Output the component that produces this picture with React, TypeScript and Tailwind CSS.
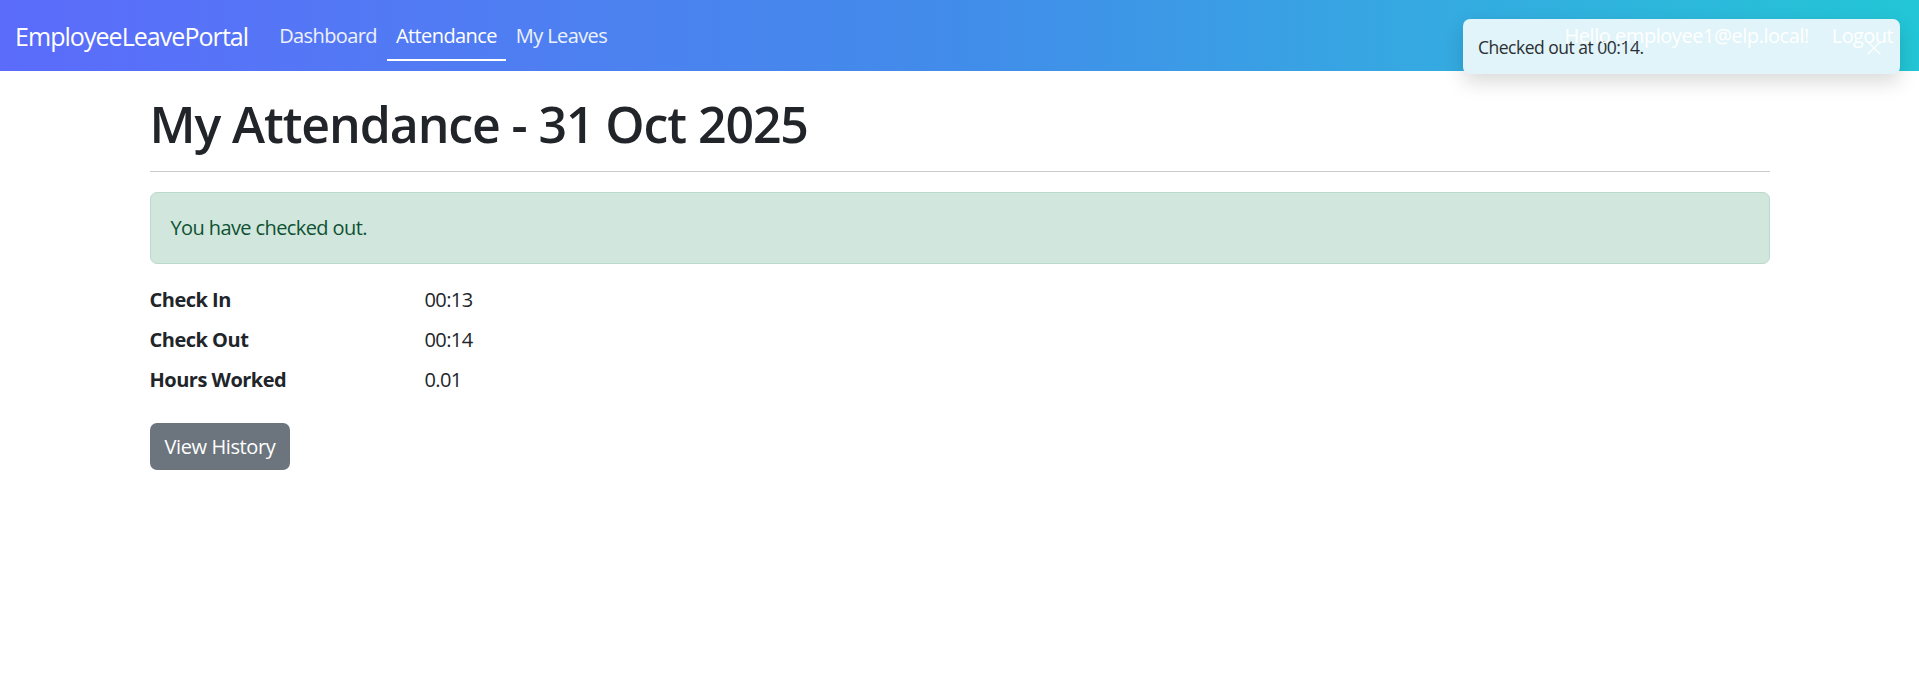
import { X } from "lucide-react";

const font = { fontFamily: '"Open Sans", "Noto Sans", sans-serif' };

const rows = [
  { label: "Check In", value: "00:13" },
  { label: "Check Out", value: "00:14" },
  { label: "Hours Worked", value: "0.01" },
];

function Navbar() {
  return (
    <nav className="h-[71px] flex items-center px-[15px] bg-gradient-to-r from-[#5b6bfb] via-[#418cea] to-[#22c6d6] text-white tracking-[-0.6px]">
      <span className="text-[25px] leading-[30px] tracking-[-0.95px] mr-[21px]">EmployeeLeavePortal</span>
      <ul className="flex items-center text-[20px] leading-[30px]">
        <li className="px-[10px] text-white/90">Dashboard</li>
        <li className="px-[9px] pt-[10px] pb-[8px] border-b-[2px] border-white">Attendance</li>
        <li className="px-[10px] text-white/90">My Leaves</li>
      </ul>
      <div className="ml-auto flex items-center relative z-20 text-[20px] leading-[30px]">
        <span className="mr-[23px] tracking-[-0.45px]">Hello employee1@elp.local!</span>
        <span className="pr-[11px]">Logout</span>
      </div>
    </nav>
  );
}

function Toast() {
  return (
    <div className="absolute z-10 top-[19px] right-[19px] w-[437px] h-[55px] rounded-[7px] bg-[#e0f4f9] shadow-[0_8px_20px_rgba(0,0,0,0.15)] flex items-center pl-[15px] pr-[14px]">
      <span className="text-[17.5px] tracking-[-0.5px] text-[#2b2f33] mt-[2px]">Checked out at 00:14.</span>
      <X className="ml-auto text-white/90 mt-[2px]" size={24} strokeWidth={1.4} />
    </div>
  );
}

export default function App() {
  return (
    <div className="relative min-h-[676px] bg-white text-[#212529]" style={font}>
      <Navbar />
      <Toast />
      <main className="w-[1620px] mx-auto pt-[23px]">
        <h1 className="text-[50px] font-semibold leading-[60px] tracking-[-1.1px]">My Attendance - 31 Oct 2025</h1>
        <hr className="mt-[17px] border-t border-[#cbcbcb]" />
        <div className="mt-[20px] h-[72px] rounded-[7px] border border-[#badbcc] bg-[#d1e7dd] text-[#0f5132] px-[20px] flex items-center text-[20px] tracking-[-0.6px]">
          You have checked out.
        </div>
        <dl className="mt-[21px] flex flex-col gap-[10px] text-[20px] leading-[30px]">
          {rows.map((r) => (
            <div key={r.label} className="flex">
              <dt className="w-[275px] font-bold tracking-[-0.5px]">{r.label}</dt>
              <dd className="tracking-[-0.6px]">{r.value}</dd>
            </div>
          ))}
        </dl>
        <button className="mt-[28px] h-[47px] px-[15px] rounded-[7px] bg-[#6c757d] text-white text-[20px] tracking-[-0.4px]">
          View History
        </button>
      </main>
    </div>
  );
}
